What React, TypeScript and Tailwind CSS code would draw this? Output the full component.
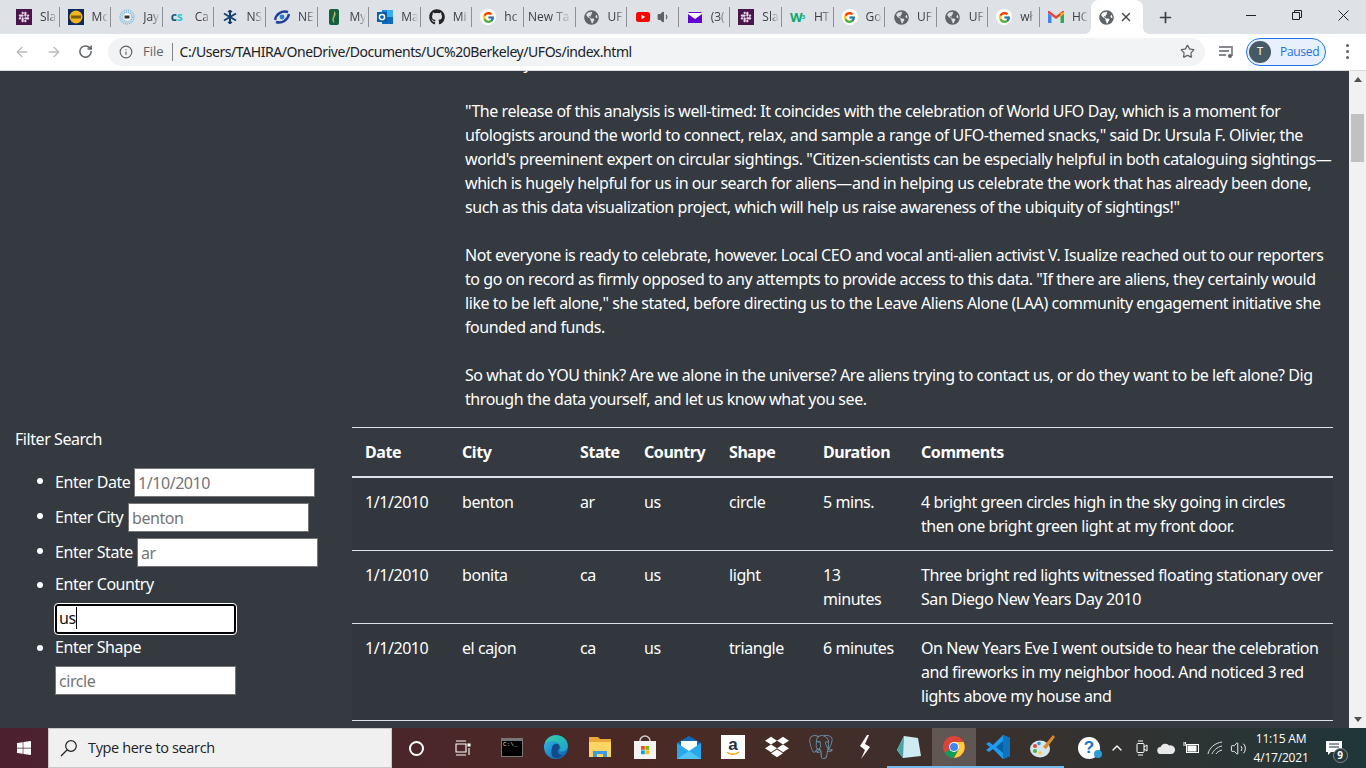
import React from "react";
import { ArrowLeft, ArrowRight, RotateCw, Info, Star, X, Plus, ChevronUp, Volume2, Volume1 } from "lucide-react";
import { FaGithub, FaGlobeAmericas, FaWindows, FaDropbox, FaSlack } from "react-icons/fa";
import { FcGoogle } from "react-icons/fc";
import { SiPostgresql } from "react-icons/si";

const G = () => (
  <span className="w-4 h-4 flex items-center justify-center rounded-full bg-white shrink-0">
    <FcGoogle size={13} />
  </span>
);
const Globe = () => <FaGlobeAmericas size={15} className="text-[#5f6368] shrink-0" />;
const Slack = () => (
  <span className="w-4 h-4 bg-[#4a154b] flex items-center justify-center shrink-0">
    <FaSlack size={12} className="text-[#e8d5e8]" />
  </span>
);
const Mc = () => (
  <svg width="16" height="16" viewBox="0 0 16 16"><rect width="16" height="16" fill="#0b2a5b" /><circle cx="8" cy="8" r="6.5" fill="#f2b51d" /><rect x="3" y="6.5" width="10" height="3" fill="#7a5d10" /></svg>
);
const Cb = () => (
  <svg width="16" height="16" viewBox="0 0 16 16"><g stroke="#5fb4e5" strokeWidth="1.2" strokeDasharray="1 1" fill="none"><circle cx="8" cy="8" r="7" /><circle cx="8" cy="8" r="5" /></g><circle cx="8" cy="8" r="3.5" fill="#fff" /><rect x="5.5" y="6.5" width="5" height="3" fill="#333" /></svg>
);
const Cs = () => <span className="w-4 text-[12px] font-bold leading-4 shrink-0 tracking-tight"><span className="text-[#0b5a7a]">c</span><span className="text-[#35c6c6]">s</span></span>;
const Snow = () => (
  <svg width="16" height="16" viewBox="0 0 16 16" stroke="#14406e" strokeWidth="2" fill="none"><path d="M8 1v14M2 4.5l12 7M14 4.5l-12 7" /><path d="M6 2l2 2 2-2M6 14l2-2 2 2" strokeWidth="1.2" /></svg>
);
const Ne = () => (
  <svg width="16" height="16" viewBox="0 0 16 16" fill="none"><path d="M1 11C2 5 8 1 14 3" stroke="#1f3f9a" strokeWidth="2.4" /><path d="M15 5c-1 6-7 10-13 8" stroke="#1f3f9a" strokeWidth="2.4" /><circle cx="8" cy="8" r="2.4" fill="#2a7fd0" /></svg>
);
const My = () => (
  <svg width="16" height="16" viewBox="0 0 16 16"><rect x="3" y="0" width="10" height="16" rx="2" fill="#12613c" /><path d="M8 2c3 3 1 5 0 7s1 4 0 5c-2-2-2-4-1-6s1-4 1-6z" fill="#c8b560" /></svg>
);
const Outlook = () => (
  <svg width="16" height="16" viewBox="0 0 16 16"><rect x="5" y="1" width="11" height="14" fill="#1a83d5" /><rect x="10" y="1" width="6" height="7" fill="#37b0ea" /><path d="M5 8h11v7H5z" fill="#0f6cbd" /><rect x="0" y="3" width="10" height="10" fill="#0a5ba8" /><circle cx="5" cy="8" r="2.6" fill="none" stroke="#fff" strokeWidth="1.5" /></svg>
);
const Yt = () => (
  <svg width="14" height="10" viewBox="0 0 14 10" className="shrink-0"><rect width="14" height="10" rx="2.5" fill="#f00" /><path d="M5.5 2.8v4.4L9.2 5z" fill="#fff" /></svg>
);
const Yahoo = () => (
  <svg width="14" height="11" viewBox="0 0 14 11" className="shrink-0"><rect width="14" height="11" fill="#5f01d1" /><path d="M0 1l7 5 7-5" stroke="#fff" strokeWidth="1.6" fill="#fff" /></svg>
);
const W3 = () => <span className="w-4 text-[13px] font-bold leading-4 text-[#04aa6d] shrink-0 tracking-tighter">W<sup className="text-[6px]">3</sup></span>;
const Gmail = () => (
  <svg width="16" height="12" viewBox="0 0 16 12" className="shrink-0"><path d="M0 2v10h3.5V5z" fill="#4285f4" /><path d="M16 2v10h-3.5V5z" fill="#34a853" /><path d="M0 2l8 6 8-6V1a1 1 0 00-2-.5L8 5 2 .5A1 1 0 000 1z" fill="#ea4335" /><path d="M12.5 2.5L16 1v2l-3.5 2.5z" fill="#fbbc04" /></svg>
);

const tabs: [React.ReactNode, string][] = [
  [<Slack />, "Sla"], [<Mc />, "Mc"], [<Cb />, "Jay"], [<Cs />, "Ca"], [<Snow />, "NS"], [<Ne />, "NE"], [<My />, "My"], [<Outlook />, "Ma"],
  [<FaGithub size={16} className="text-[#222] shrink-0" />, "Mi"], [<G />, "hc"], [null, "New Ta"], [<Globe />, "UF"], [<Yt />, ""], [<Yahoo />, "(3("],
  [<Slack />, "Sla"], [<W3 />, "HT"], [<G />, "Go"], [<Globe />, "UF"], [<Globe />, "UF"], [<G />, "wł"], [<Gmail />, "HC"],
];

const rows: string[][] = [
  ["1/1/2010", "benton", "ar", "us", "circle", "5 mins."],
  ["1/1/2010", "bonita", "ca", "us", "light", "13 minutes"],
  ["1/1/2010", "el cajon", "ca", "us", "triangle", "6 minutes"],
];
const comments: string[][] = [
  ["4 bright green circles high in the sky going in circles", "then one bright green light at my front door."],
  ["Three bright red lights witnessed floating stationary over", "San Diego New Years Day 2010"],
  ["On New Years Eve I went outside to hear the celebration", "and fireworks in my neighbor hood. And noticed 3 red", "lights above my house and"],
];

const inputBase = "inline-block align-top w-[181px] h-[29px] bg-white border border-[#767676] px-[3px] text-[16px] text-[#757575] outline-none tracking-[-0.44px]";

const Slot = ({ children, active, bar }: { children: React.ReactNode; active?: boolean; bar?: boolean }) => (
  <div className={`w-[44.17px] h-full shrink-0 flex items-center justify-center border-b-2 ${active ? "bg-[#ffffff30]" : ""} ${bar ? "border-[#76b9ed]" : "border-transparent"}`}>
    {children}
  </div>
);

export default function App() {
  return (
    <div className="h-screen w-[1366px] flex flex-col overflow-hidden bg-[#343a40] font-['Noto_Sans','Open_Sans',sans-serif]">
      {/* tab strip */}
      <div className="h-[34px] shrink-0 bg-[#dee1e6] flex pl-[8px] font-['Open_Sans',sans-serif]">
        {tabs.map(([icon, label], i) => (
          <div key={i} className="w-[51.6px] shrink-0 flex items-center">
            <div className={`flex items-center flex-1 min-w-0 ${icon ? "pl-[8px]" : "pl-[4px]"} ${icon ? "gap-[8px]" : ""}`}>
              <span className={icon ? "w-4 flex justify-center shrink-0" : "hidden"}>{icon}</span>
              {label ? (
                <span className="flex-1 min-w-0 overflow-hidden whitespace-nowrap text-[12px] text-[#3c4043] [mask-image:linear-gradient(to_right,black_50%,transparent_100%)]">{label}</span>
              ) : (
                <Volume1 size={14} className="text-[#5f6368] fill-[#5f6368] ml-[-2px]" />
              )}
            </div>
            <div className={`w-px h-[20px] shrink-0 ml-[2px] ${i === tabs.length - 1 ? "bg-transparent" : "bg-[#8e9195]"}`} />
          </div>
        ))}
        <div className="relative w-[52px] shrink-0 bg-white rounded-t-[8px] flex items-center pl-[8px] gap-[4px] mt-0">
          <div className="absolute -left-[6px] bottom-0 w-[6px] h-[6px] bg-[radial-gradient(circle_at_0_0,transparent_5.5px,white_6px)]" />
          <div className="absolute -right-[6px] bottom-0 w-[6px] h-[6px] bg-[radial-gradient(circle_at_100%_0,transparent_5.5px,white_6px)]" />
          <FaGlobeAmericas size={15} className="text-[#5f6368]" />
          <X size={14} strokeWidth={2.5} className="text-[#45494d] ml-[1px]" />
        </div>
        <div className="flex items-center ml-[14px]">
          <Plus size={17} strokeWidth={2.4} className="text-[#3c4043]" />
        </div>
        <div className="flex-1" />
        <div className="flex h-[30px] items-center">
          <div className="w-[46px] flex justify-center"><div className="w-[10px] h-px bg-[#222]" /></div>
          <div className="w-[46px] flex justify-center">
            <svg width="10" height="10" viewBox="0 0 10 10" fill="none" stroke="#222"><path d="M.5 2.5h7v7h-7zM2.5 2.5v-2h7v7h-2" /></svg>
          </div>
          <div className="w-[46px] flex justify-center">
            <svg width="11" height="11" viewBox="0 0 11 11" stroke="#222"><path d="M.5.5l10 10M10.5.5l-10 10" /></svg>
          </div>
        </div>
      </div>
      {/* toolbar */}
      <div className="h-[37px] shrink-0 bg-white flex items-center border-b border-[#dadce0] pb-[1px]">
        <div className="w-[108px] shrink-0 flex items-center pl-[14px] gap-[16px]">
          <ArrowLeft size={16} strokeWidth={2} className="text-[#b9bbbe]" />
          <ArrowRight size={16} strokeWidth={2} className="text-[#b9bbbe]" />
          <RotateCw size={15} strokeWidth={2.4} className="text-[#5f6368]" />
        </div>
        <div className="w-[1097px] h-[28px] rounded-full bg-[#f1f3f4] flex items-center pl-[11px] pr-[10px] shrink-0">
          <Info size={14} strokeWidth={2} className="text-[#5f6368]" />
          <span className="ml-[10px] text-[13px] text-[#5f6368] font-['Open_Sans',sans-serif]">File</span>
          <div className="w-px h-[18px] bg-[#80868b] ml-[8px]" />
          <span className="ml-[7px] text-[14px] text-[#202124] tracking-[-0.45px]">C:/Users/TAHIRA/OneDrive/Documents/UC%20Berkeley/UFOs/index.html</span>
          <div className="flex-1" />
          <Star size={15} strokeWidth={2} className="text-[#5f6368]" />
        </div>
        <div className="ml-[14px] shrink-0 flex">
          <svg width="16" height="14" viewBox="0 0 16 14" fill="none" stroke="#5f6368" strokeWidth="1.4"><path d="M0 2h12M0 6h10M0 10h7M13 1v10" /><circle cx="11" cy="11" r="2" fill="#5f6368" stroke="none" /></svg>
        </div>
        <div className="ml-[11px] w-[80px] h-[28px] rounded-full border border-[#1a73e8] bg-[#e8f0fe] flex items-center pl-[2px] shrink-0">
          <span className="w-[22px] h-[22px] rounded-full bg-[#455a64] text-white text-[11px] flex items-center justify-center">T</span>
          <span className="ml-[9px] text-[12px] text-[#1a73e8] font-['Open_Sans',sans-serif] tracking-[-0.3px]">Paused</span>
        </div>
        <div className="flex-1 flex flex-col items-center gap-[3px] pl-[2px]">
          <span className="w-[3px] h-[3px] rounded-full bg-[#5f6368]" />
          <span className="w-[3px] h-[3px] rounded-full bg-[#5f6368]" />
          <span className="w-[3px] h-[3px] rounded-full bg-[#5f6368]" />
        </div>
      </div>
      {/* page */}
      <div className="flex-1 min-h-0 flex">
        <div className="flex-1 min-w-0 overflow-hidden flex bg-[#343a40] text-white text-[16px] leading-[24px] tracking-[-0.44px]">
          <aside className="w-[352px] shrink-0 pl-[15px] pt-[356px]">
            <div>Filter Search</div>
            <ul className="list-disc pl-[40px] mt-[17px]">
              <li className="mb-[6px] h-[29px]"><span className="inline-block align-top w-[79px] leading-[29px]">Enter Date</span><input readOnly className={inputBase} value="1/10/2010" /></li>
              <li className="mb-[6px] h-[29px]"><span className="inline-block align-top w-[73px] leading-[29px]">Enter City</span><input readOnly className={inputBase} value="benton" /></li>
              <li className="mb-[5px] h-[29px]"><span className="inline-block align-top w-[82px] leading-[29px]">Enter State</span><input readOnly className={inputBase} value="ar" /></li>
              <li>
                <div className="h-[24px]">Enter Country</div>
                <div className="mt-[8px] h-[30px] w-[181px] rounded-[3px] border-2 border-black bg-white outline outline-white text-[#111] pl-[2px] leading-[25px]">us<span className="border-l border-black ml-[0.5px]" /></div>
              </li>
              <li className="mt-[1px]">
                <div className="h-[24px]">Enter Shape</div>
                <input readOnly className={`${inputBase} mt-[7px] block`} value="circle" />
              </li>
            </ul>
          </aside>
          <main className="flex-1 min-w-0 -mt-[20px] pr-[16px]">
            <div className="pl-[113px]">
              <p className="mb-[24px]">the study.</p>
              <p className="mb-[24px] whitespace-nowrap">
                "The release of this analysis is well-timed: It coincides with the celebration of World UFO Day, which is a moment for<br />
                ufologists around the world to connect, relax, and sample a range of UFO-themed snacks," said Dr. Ursula F. Olivier, the<br />
                world's preeminent expert on circular sightings. "Citizen-scientists can be especially helpful in both cataloguing sightings—<br />
                which is hugely helpful for us in our search for aliens—and in helping us celebrate the work that has already been done,<br />
                such as this data visualization project, which will help us raise awareness of the ubiquity of sightings!"
              </p>
              <p className="mb-[24px] whitespace-nowrap">
                Not everyone is ready to celebrate, however. Local CEO and vocal anti-alien activist V. Isualize reached out to our reporters<br />
                to go on record as firmly opposed to any attempts to provide access to this data. "If there are aliens, they certainly would<br />
                like to be left alone," she stated, before directing us to the Leave Aliens Alone (LAA) community engagement initiative she<br />
                founded and funds.
              </p>
              <p className="mb-[16px] whitespace-nowrap">
                So what do YOU think? Are we alone in the universe? Are aliens trying to contact us, or do they want to be left alone? Dig<br />
                through the data yourself, and let us know what you see.
              </p>
            </div>
            <table className="w-[981px] table-fixed border-collapse">
              <colgroup>
                <col className="w-[97px]" /><col className="w-[118px]" /><col className="w-[64px]" /><col className="w-[85px]" /><col className="w-[94px]" /><col className="w-[98px]" /><col />
              </colgroup>
              <thead>
                <tr className="border-t border-[#dee2e6] border-b-2">
                  {["Date", "City", "State", "Country", "Shape", "Duration", "Comments"].map((h) => (
                    <th key={h} className="text-left font-bold pl-[13px] pr-[11px] py-[12px]">{h}</th>
                  ))}
                </tr>
              </thead>
              <tbody>
                {rows.map((r, i) => (
                  <tr key={i} className={`border-b border-[#dee2e6] ${i % 2 === 0 ? "bg-[#32373e]" : ""}`}>
                    {r.map((c, j) => (
                      <td key={j} className="align-top pl-[13px] pr-[11px] py-[12px]">{c}</td>
                    ))}
                    <td className="align-top pl-[13px] py-[12px] whitespace-nowrap">
                      {comments[i].map((line, k) => (
                        <div key={k}>{line}</div>
                      ))}
                    </td>
                  </tr>
                ))}
              </tbody>
            </table>
          </main>
        </div>
        {/* scrollbar */}
        <div className="w-[17px] shrink-0 bg-[#f1f1f1] flex flex-col items-center">
          <div className="h-[17px] flex items-center justify-center">
            <svg width="8" height="5" viewBox="0 0 8 5"><path d="M4 0l4 5H0z" fill="#505050" /></svg>
          </div>
          <div className="mt-[26px] h-[48px] w-[13px] bg-[#c1c1c1]" />
          <div className="flex-1" />
          <div className="h-[17px] flex items-center justify-center">
            <svg width="8" height="5" viewBox="0 0 8 5"><path d="M4 5l4-5H0z" fill="#505050" /></svg>
          </div>
        </div>
      </div>
      {/* taskbar */}
      <div className="h-[40px] shrink-0 flex items-center bg-gradient-to-r from-[#4d2030] via-[#4a2a24] to-[#1f3638] text-white">
        <div className="w-[48px] h-full flex items-center justify-center shrink-0"><FaWindows size={16} /></div>
        <div className="w-[344px] h-full shrink-0 bg-[#f0f0f0] border border-[#c8c8c8] flex items-center pl-[11px] text-[14.5px] text-[#222] font-['Open_Sans',sans-serif] tracking-[-0.35px]">
          <svg width="18" height="18" viewBox="0 0 18 18" fill="none" stroke="#222" strokeWidth="1.2"><circle cx="11" cy="7" r="5.3" /><path d="M7 11l-6 6" /></svg>
          <span className="ml-[10px]">Type here to search</span>
        </div>
        <div className="w-[48px] flex justify-center shrink-0"><div className="w-[15px] h-[15px] rounded-full border-2 border-white" /></div>
        <div className="w-[50px] flex justify-start pl-[15px] shrink-0">
          <svg width="16" height="16" viewBox="0 0 16 16" fill="none" stroke="#fff" strokeWidth="1.1"><path d="M1 1h10M1 15h10M1 4h10v8H1z" /><rect x="13" y="4" width="2" height="2" fill="#fff" /><path d="M14 8v7" /></svg>
        </div>
        <Slot>
          <div className="w-[22px] h-[19px] bg-black border border-[#777] border-t-[3px] text-[6px] leading-[8px] text-[#ddd] font-['Liberation_Mono',monospace] pl-[1px]">C:\_</div>
        </Slot>
        <Slot>
          <svg width="24" height="24" viewBox="0 0 24 24">
            <defs><linearGradient id="e1" x1="0" y1="0" x2="1" y2="1"><stop offset="0" stopColor="#35c1f1" /><stop offset="1" stopColor="#0c59a4" /></linearGradient><linearGradient id="e2" x1="0" y1="0" x2="1" y2="1"><stop offset="0" stopColor="#36d399" /><stop offset="1" stopColor="#1a9ed8" /></linearGradient></defs>
            <circle cx="12" cy="12" r="12" fill="url(#e1)" />
            <path d="M1 9C3 1 13-2 20 3c4 3 5 9 2 12-2 2-6 2-7 0 2-1 2-4 0-6C11 5 4 5 1 9z" fill="url(#e2)" />
            <path d="M8 13c0-3 3-5 6-4 2 2 2 5 0 6-1 4 2 5 5 5-3 3-7 4-10 2-2-2-2-6-1-9z" fill="#114a8b" />
          </svg>
        </Slot>
        <Slot>
          <svg width="22" height="20" viewBox="0 0 22 20"><path d="M0 0h9l2 2h11v18H0z" fill="#e8a93a" /><path d="M0 5h22v15H0z" fill="#fcd462" /><path d="M4 20v-6h14v6h-4v-3H8v3z" fill="#3d9ae0" /></svg>
        </Slot>
        <Slot>
          <svg width="24" height="24" viewBox="0 0 24 24"><path d="M7 6a5 5 0 0110 0" fill="none" stroke="#ccc" strokeWidth="1.6" /><path d="M1 6h22v18H1z" fill="#f4f4f4" /><rect x="8" y="11" width="3.8" height="3.8" fill="#f25022" /><rect x="12.4" y="11" width="3.8" height="3.8" fill="#7fba00" /><rect x="8" y="15.4" width="3.8" height="3.8" fill="#00a4ef" /><rect x="12.4" y="15.4" width="3.8" height="3.8" fill="#ffb900" /></svg>
        </Slot>
        <Slot>
          <svg width="24" height="23" viewBox="0 0 24 23"><path d="M0 7L12 0l12 7v16H0z" fill="#0f6cbd" /><path d="M4 5h16v11H4z" fill="#fff" /><path d="M0 7l12 8 12-8v16H0z" fill="#28a8ea" /><path d="M0 23l12-8 12 8z" fill="#50c4f4" /></svg>
        </Slot>
        <Slot>
          <div className="w-[24px] h-[24px] bg-white flex flex-col items-center justify-center text-[#232f3e] text-[17px] font-bold leading-[14px] font-['Liberation_Sans',sans-serif]">
            a
            <svg width="14" height="4" viewBox="0 0 14 4" fill="none"><path d="M1 0c3 3 8 3 12 0" stroke="#f90" strokeWidth="1.3" /></svg>
          </div>
        </Slot>
        <Slot><FaDropbox size={24} /></Slot>
        <Slot><SiPostgresql size={24} className="text-[#6f9fc0]" /></Slot>
        <Slot>
          <svg width="12" height="24" viewBox="0 0 12 24" fill="#fff"><path d="M8 0L1 11l5 4-4 9 9-12-5-3 4-9z" /></svg>
        </Slot>
        <Slot bar>
          <svg width="26" height="24" viewBox="0 0 26 24"><path d="M8 1l14 2 3 18-18 2L1 15z" fill="#cfeaf0" /><path d="M8 1l-7 14 6 8z" fill="#4aa3a8" /></svg>
        </Slot>
        <Slot active bar>
          <svg width="22" height="22" viewBox="0 0 22 22">
            <circle cx="11" cy="11" r="11" fill="#db4437" />
            <path d="M11 11L1.5 16.5A11 11 0 0011 22l5-9z" fill="#0f9d58" />
            <path d="M11 6h9.5A11 11 0 0111 22l5-9z" fill="#ffcd40" />
            <circle cx="11" cy="11" r="5" fill="#fff" /><circle cx="11" cy="11" r="4" fill="#4285f4" />
          </svg>
        </Slot>
        <Slot bar>
          <svg width="24" height="24" viewBox="0 0 24 24"><path d="M17 0l7 3v18l-7 3L7 14l-4 3-3-2 4-3-4-3 3-2 4 3z" fill="#1f9cf0" /><path d="M17 6v12l-7-6z" fill="#0b5f9e" /><path d="M17 0l7 3v18l-7 3z" fill="#0f72bd" /></svg>
        </Slot>
        <Slot bar>
          <svg width="26" height="24" viewBox="0 0 26 24"><ellipse cx="11" cy="14" rx="10" ry="8.5" fill="#d6e4ec" /><circle cx="6" cy="11" r="2" fill="#e0463a" /><circle cx="10" cy="8.5" r="1.8" fill="#2f9ad6" /><circle cx="6" cy="16" r="2" fill="#4caf50" /><circle cx="11" cy="18" r="1.8" fill="#f7c948" /><path d="M24 0l2 2-9 12-3-2z" fill="#d98a2b" /></svg>
        </Slot>
        <div className="w-[14px] shrink-0" />
        <div className="w-[22px] h-[22px] rounded-full bg-white text-[#1a73c8] text-[17px] font-bold leading-[22px] text-center shrink-0 font-['Liberation_Sans',sans-serif]">?</div>
        <div className="w-[8px] h-[8px] rounded-full bg-[#2f9ad6] -ml-[6px] mt-[12px] shrink-0" />
        <div className="w-[28px] flex justify-center shrink-0 ml-[1px]"><ChevronUp size={16} /></div>
        <div className="w-[22px] flex justify-center shrink-0">
          <svg width="12" height="16" viewBox="0 0 12 16" fill="none" stroke="#fff" strokeWidth="1"><rect x="1" y="3.5" width="7" height="9" rx="1" /><path d="M8 7l3-2v6l-3-2M2 1h5M2 15h5" /></svg>
        </div>
        <div className="w-[26px] flex justify-center shrink-0">
          <svg width="18" height="11" viewBox="0 0 18 11" fill="#e8e8e8"><path d="M4 11a3.5 3.5 0 01-.5-7A5 5 0 0112 2.5 4 4 0 0115 11z" /></svg>
        </div>
        <div className="w-[24px] flex justify-center shrink-0">
          <svg width="17" height="12" viewBox="0 0 17 12" fill="none" stroke="#fff"><rect x="3.5" y="2.5" width="12" height="8" /><rect x="5" y="4" width="8" height="5" fill="#fff" /><path d="M0 3h3M1 0v2M2.5 0v2" /></svg>
        </div>
        <div className="w-[24px] flex justify-center shrink-0">
          <svg width="16" height="14" viewBox="0 0 16 14" fill="none" stroke="#ddd" strokeWidth="1"><path d="M1 13C2 7 8 2 15 1M5 13c1-3 5-7 10-8M9 13c1-2 3-3 6-4" /></svg>
        </div>
        <div className="w-[22px] flex justify-center shrink-0"><Volume2 size={17} strokeWidth={1.3} /></div>
        <div className="w-[64px] text-center text-[12px] leading-[19px] shrink-0 font-['Open_Sans',sans-serif] tracking-[-0.2px]">
          <div>11:15 AM</div>
          <div>4/17/2021</div>
        </div>
        <div className="flex-1 flex justify-center pr-[12px]">
          <div className="relative">
            <svg width="16" height="15" viewBox="0 0 16 15"><path d="M0 0h16v11H5l-3 3v-3H0z" fill="#fff" /><path d="M3 3h10M3 6h10" stroke="#1f3638" /></svg>
            <span className="absolute left-[7px] top-[7px] w-[15px] h-[15px] rounded-full bg-[#26363a] border border-[#888] text-[10px] font-bold leading-[13px] text-center">9</span>
          </div>
        </div>
      </div>
    </div>
  );
}
